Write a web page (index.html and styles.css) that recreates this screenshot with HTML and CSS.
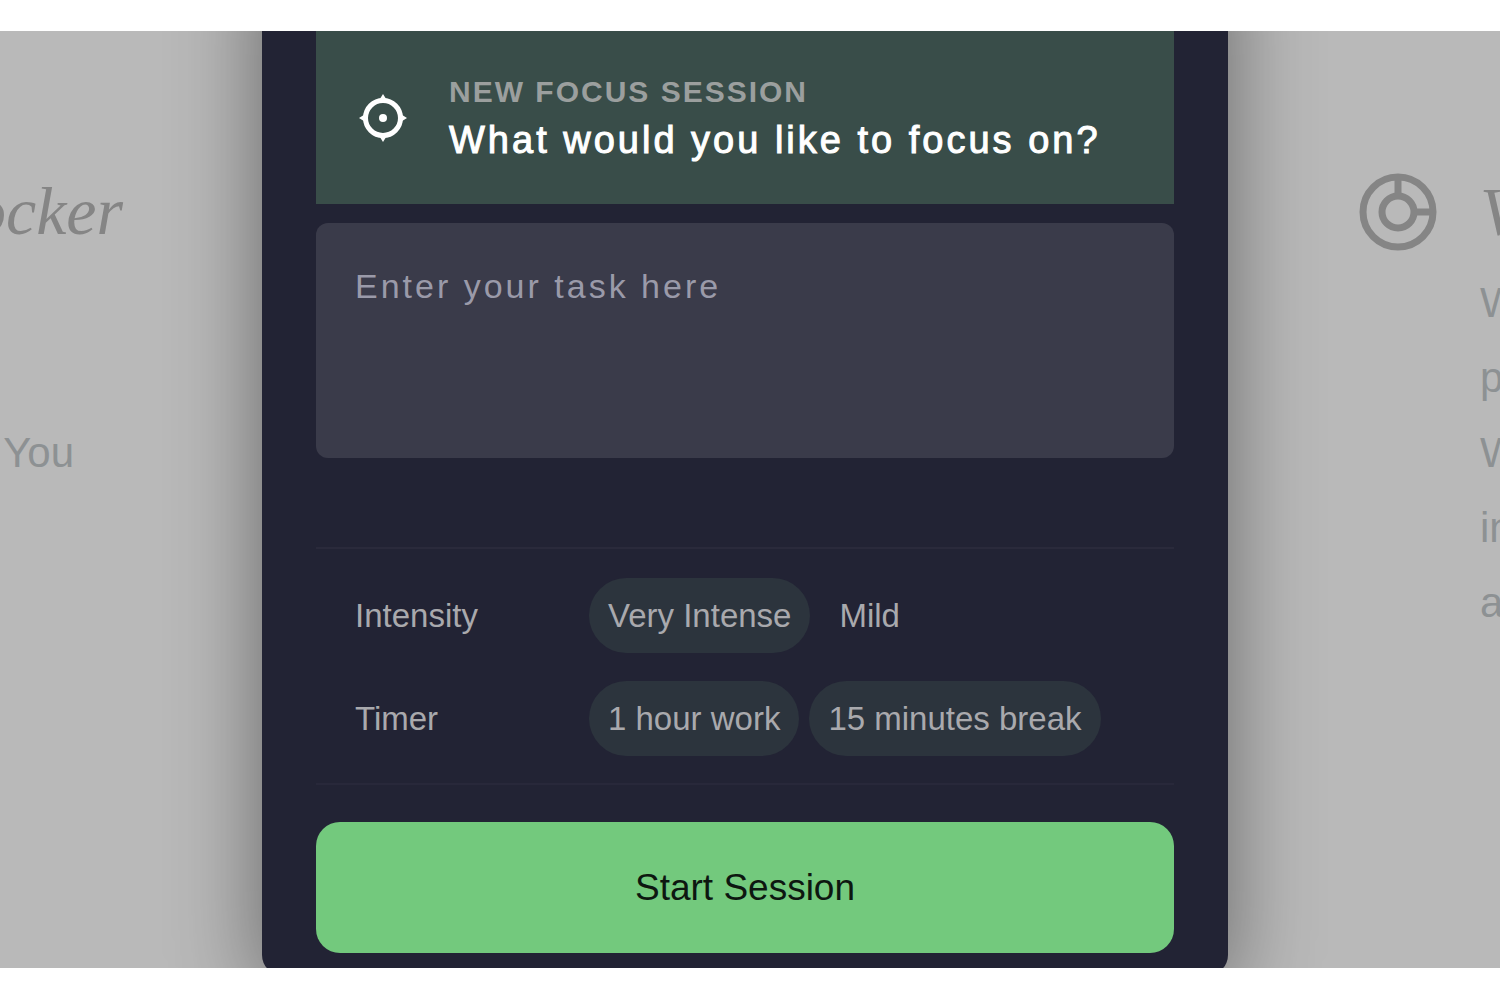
FILE: index.html
```
<!DOCTYPE html>
<html lang="en">
<head>
    <meta charset="UTF-8">
    <title>Focus Session</title>
    <link rel="stylesheet" href="styles.css">
</head>
<body>
    <main class="stage">
        <section class="side left">
            <h2>Blocker</h2>
            <p>You</p>
        </section>
        <form class="modal">
            <header class="banner">
                <svg class="target" viewBox="0 0 48 48" aria-hidden="true">
                    <circle cx="24" cy="24" r="17.5" fill="none" stroke="#fff" stroke-width="5"/>
                    <circle cx="24" cy="24" r="4" fill="#fff"/>
                    <path d="M24 0l5 8H19zM24 48l5-8H19zM0 24l8-5v10zM48 24l-8-5v10z" fill="#fff"/>
                </svg>
                <div>
                    <p class="tag">NEW FOCUS SESSION</p>
                    <h1><label for="task">What would you like to focus on?</label></h1>
                </div>
            </header>
            <textarea id="task" class="task" placeholder="Enter your task here"></textarea>
            <div class="options">
                <div class="row">
                    <span class="name" id="intensity">Intensity</span>
                    <div class="chips" role="group" aria-labelledby="intensity">
                        <button type="button" class="chip current">Very Intense</button>
                        <button type="button" class="chip">Mild</button>
                    </div>
                </div>
                <div class="row">
                    <span class="name" id="timer">Timer</span>
                    <div class="chips" role="group" aria-labelledby="timer">
                        <button type="button" class="chip current">1 hour work</button>
                        <button type="button" class="chip current">15 minutes break</button>
                    </div>
                </div>
            </div>
            <button type="submit" class="start">Start Session</button>
        </form>
        <section class="side right">
            <svg class="wheel" viewBox="0 0 78 78" aria-hidden="true">
                <g fill="none" stroke="#858585" stroke-width="7">
                    <circle cx="39" cy="39" r="35"/>
                    <circle cx="39" cy="39" r="16"/>
                    <path d="M39 4v19M55 39h19"/>
                </g>
            </svg>
            <div>
                <h2>V</h2>
                <p>W<br>p<br>W<br>in<br>a</p>
            </div>
        </section>
    </main>
</body>
</html>
```

FILE: styles.css
```
*{
    box-sizing: border-box;
    margin: 0;
    padding: 0;
}
body{
    padding: 31px 0 32px;
    background-color: white;
    font-family: "Liberation Sans", Arial, sans-serif;
}
button, textarea{
    font-family: inherit;
    border: none;
}
.stage{
    display: grid;
    grid-template-columns: 262fr 966fr 272fr;
    align-items: start;
    height: calc(100vh - 63px);
    overflow: hidden;
    background-color: #b9b9b9;
}

/* page behind the dialog */
.side{
    min-width: 0;
    padding-top: 136px;
    overflow: hidden;
    color: #858585;
}
.side h2{
    font-family: "Z003", "URW Chancery L", "Liberation Serif", serif;
    font-size: 68px;
    font-style: italic;
    font-weight: normal;
    line-height: 88px;
}
.side p{
    font-size: 42px;
    line-height: 75px;
    color: #8d9193;
}
.left{
    display: flex;
    flex-direction: column;
    align-items: flex-end;
    gap: 160px;
    padding-right: 139px;
}
.left p{
    padding-right: 49px;
}
.right{
    display: flex;
    gap: 43px;
    padding-left: 131px;
}
.right p{
    padding-top: 10px;
}
.wheel{
    flex: none;
    width: 78px;
    height: 78px;
    margin-top: 6px;
}

/* dialog */
.modal{
    position: relative;
    display: flex;
    flex-direction: column;
    min-width: 0;
    margin-top: -100px;
    padding: 100px 54px 22px;
    border-radius: 20px;
    background-color: #222334;
    box-shadow: 0 20px 90px rgba(0, 0, 0, 0.45);
}
.banner{
    display: flex;
    align-items: center;
    gap: 42px;
    height: 173px;
    padding: 0 43px;
    background-color: #394d49;
}
.target{
    flex: none;
    width: 48px;
    height: 48px;
}
.tag{
    font-size: 30px;
    font-weight: bold;
    line-height: 46px;
    letter-spacing: 2px;
    color: #9b9f9e;
}
.banner h1{
    padding-bottom: 2px;
    font-size: 38px;
    font-weight: normal;
    line-height: 50px;
    letter-spacing: 3px;
    color: white;
    -webkit-text-stroke: 1px white;
}
.task{
    width: 100%;
    height: 235px;
    margin-top: 19px;
    padding: 44px 39px;
    border-radius: 12px;
    background-color: #3a3b4a;
    font-size: 34px;
    letter-spacing: 3px;
    color: white;
    resize: none;
}
.task::placeholder{
    color: #9a9aa9;
}
.options{
    display: flex;
    flex-direction: column;
    gap: 28px;
    margin: 89px 0 37px;
    padding: 29px 0 27px 39px;
    border-top: 2px solid #2a2a3b;
    border-bottom: 2px solid #28283a;
}
.row{
    display: flex;
    align-items: center;
}
.name{
    width: 234px;
    font-size: 33px;
    color: #a9a9ad;
}
.chips{
    display: flex;
    gap: 10px;
}
.chip{
    height: 75px;
    padding: 0 19px;
    border-radius: 38px;
    background-color: transparent;
    font-size: 33px;
    color: #a9a9ad;
    white-space: nowrap;
    cursor: pointer;
}
.current{
    background-color: #2c343d;
}
.start{
    height: 131px;
    border-radius: 24px;
    background-color: #73c97d;
    font-size: 37px;
    color: #0d1710;
    cursor: pointer;
}
```
